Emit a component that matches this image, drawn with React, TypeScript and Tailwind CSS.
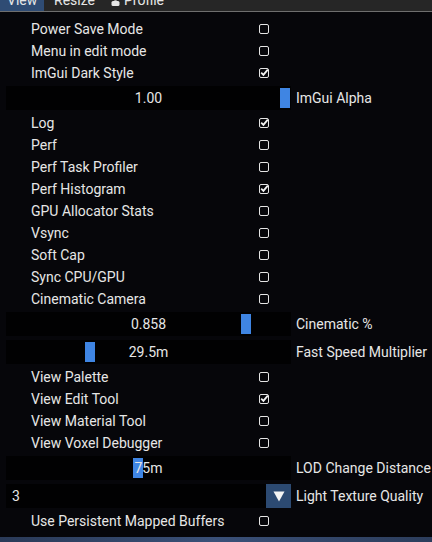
import React from "react";

type Row =
  | { kind: "check"; label: string; checked: boolean }
  | { kind: "slider"; label: string; value: string; pos: number }
  | { kind: "combo"; label: string; value: string };

const rows: Row[] = [
  { kind: "check", label: "Power Save Mode", checked: false },
  { kind: "check", label: "Menu in edit mode", checked: false },
  { kind: "check", label: "ImGui Dark Style", checked: true },
  { kind: "slider", label: "ImGui Alpha", value: "1.00", pos: 274 },
  { kind: "check", label: "Log", checked: true },
  { kind: "check", label: "Perf", checked: false },
  { kind: "check", label: "Perf Task Profiler", checked: false },
  { kind: "check", label: "Perf Histogram", checked: true },
  { kind: "check", label: "GPU Allocator Stats", checked: false },
  { kind: "check", label: "Vsync", checked: false },
  { kind: "check", label: "Soft Cap", checked: false },
  { kind: "check", label: "Sync CPU/GPU", checked: false },
  { kind: "check", label: "Cinematic Camera", checked: false },
  { kind: "slider", label: "Cinematic %", value: "0.858", pos: 235 },
  { kind: "slider", label: "Fast Speed Multiplier", value: "29.5m", pos: 79 },
  { kind: "check", label: "View Palette", checked: false },
  { kind: "check", label: "View Edit Tool", checked: true },
  { kind: "check", label: "View Material Tool", checked: false },
  { kind: "check", label: "View Voxel Debugger", checked: false },
  { kind: "slider", label: "LOD Change Distance", value: "75m", pos: 127 },
  { kind: "combo", label: "Light Texture Quality", value: "3" },
  { kind: "check", label: "Use Persistent Mapped Buffers", checked: false },
];

function Checkbox({ checked }: { checked: boolean }) {
  return (
    <div className="w-[10px] h-[10px] rounded-[2px] border-[1.5px] border-[#e4e4e4] relative">
      {checked && (
        <svg
          className="absolute left-[0px] top-[-1px]"
          width="9"
          height="9"
          viewBox="0 0 9 9"
        >
          <path d="M1.2 4.6 L3.4 6.8 L7.8 1.6" stroke="#f2f2f2" strokeWidth="1.8" fill="none" />
        </svg>
      )}
    </div>
  );
}

export default function App() {
  return (
    <div
      className="w-[432px] h-[542px] overflow-hidden bg-[#06060a] text-[#e6e6e6] flex flex-col"
      style={{ fontFamily: "Roboto, 'Noto Sans', sans-serif" }}
    >
      <div className="h-[22px] mt-[-10px] bg-[#262626] border-b border-[#6e6e6e] flex items-center text-[14px] shrink-0">
        <div className="h-full w-[44px] bg-[#2f4c74] flex items-center pl-[7px]">View</div>
        <div className="pl-[10px]">Resize</div>
        <div className="pl-[16px] flex items-center gap-[4px]">
          <svg width="9" height="10" viewBox="0 0 9 10">
            <circle cx="4.5" cy="2.5" r="2.2" fill="#e6e6e6" />
            <rect x="0.5" y="5" width="8" height="5" rx="1.5" fill="#e6e6e6" />
          </svg>
          <span>Profile</span>
        </div>
      </div>
      <div className="pt-[6px] flex flex-col text-[14px]">
        {rows.map((r, i) => {
          if (r.kind === "check") {
            return (
              <div key={i} className="h-[22px] flex items-center">
                <div className="w-[259px] pl-[31px] whitespace-nowrap">{r.label}</div>
                <Checkbox checked={r.checked} />
              </div>
            );
          }
          if (r.kind === "slider") {
            return (
              <div key={i} className="h-[28px] flex items-center">
                <div className="ml-[6px] w-[285px] h-[24px] bg-[#010102] relative flex items-center justify-center">
                  <div
                    className="absolute top-[2px] w-[10px] h-[20px] bg-[#3f85e3]"
                    style={{ left: r.pos }}
                  />
                  <span className="relative">{r.value}</span>
                </div>
                <div className="pl-[5px] whitespace-nowrap">{r.label}</div>
              </div>
            );
          }
          return (
            <div key={i} className="h-[28px] flex items-center">
              <div className="ml-[6px] w-[285px] h-[24px] bg-[#010102] flex items-center">
                <span className="pl-[6px] flex-1">{r.value}</span>
                <div className="w-[25px] h-[24px] bg-[#2c4a72] flex items-center justify-center">
                  <svg width="12" height="11" viewBox="0 0 12 11">
                    <path d="M0.5 0.5 L11.5 0.5 L6 10.5 Z" fill="#f4f4f4" />
                  </svg>
                </div>
              </div>
              <div className="pl-[5px] whitespace-nowrap">{r.label}</div>
            </div>
          );
        })}
      </div>
      <div className="mt-[5px] h-[6px] bg-gradient-to-r from-[#2a3a58] via-[#3a5078] to-[#2c3d5c] shrink-0" />
    </div>
  );
}
